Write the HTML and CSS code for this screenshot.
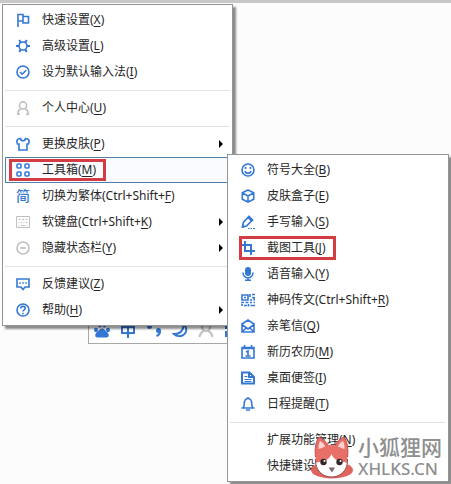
FILE: index.html
```html
<!DOCTYPE html>
<html lang="zh">
<head>
  <meta charset="UTF-8" />
  <meta name="viewport" content="width=device-width, initial-scale=1.0" />
  <title>输入法菜单</title>
  <link rel="stylesheet" href="styles.css">
</head>
<body>
  <div class="status-bar">
    <button aria-label="百度输入法"><svg viewBox="0 0 16 16"><g class="solid"><ellipse cx="2" cy="8" rx="2" ry="2.2"/><ellipse cx="5.800" cy="3.200" rx="1.8" ry="2.4"/><ellipse cx="10.400" cy="3.200" rx="1.8" ry="2.4"/><ellipse cx="14" cy="8" rx="2" ry="2.200"/><path d="M8 6.500c2 0 3 1.500 4.500 3C16 12.500 15 15.500 12.500 15.500h-9C1 15.500 0 12.500 3.500 9.500 5 8 6 6.500 8 6.500z"/></g></svg></button>
    <button aria-label="中文"><svg viewBox="0 0 16 16"><path d="M8 1v15M2 5h12v6H2z"/></svg></button>
    <button aria-label="中文标点"><svg viewBox="0 0 16 16"><circle class="solid" cx="3.500" cy="4.500" r="2.500"/><circle class="solid" cx="12.500" cy="8.500" r="2.500"/><path d="M14 8.500c.2 2.500-.8 4.500-3.500 5.500"/></svg></button>
    <button aria-label="半角"><svg viewBox="0 0 16 16"><path d="M11.500 2c3.500 3 3.800 8 .5 10.500-3 2.500-7.500 2-10-.5 6 0 10-3.500 9.500-10z"/></svg></button>
    <button class="muted" aria-label="登录"><svg viewBox="0 0 16 16"><circle cx="8" cy="5" r="4"/><path d="M1.500 15c.5-3.500 2-5 4.500-6M14.500 15c-.5-3.500-2-5-4.500-6"/></svg></button>
    <button aria-label="工具箱"><svg viewBox="0 0 16 16"><path d="M2 2h4v4H2zM10 2h4v4h-4zM2 10h4v4H2zM10 10h4v4h-4z"/></svg></button>
  </div>

  <ul class="menu main-menu">
    <li><button class="item">
      <svg viewBox="0 0 14 14"><path d="M2 14V1.500h5V8H2M7 3.500h5.500V10H7V8"/></svg>
      <span>快速设置(<u>X</u>)</span>
    </button></li>
    <li><button class="item">
      <svg viewBox="0 0 14 14"><circle cx="7" cy="7" r="4"/><path class="thick" d="M4.800 3.800L3.300 1M9.200 3.800L10.700 1M4.800 10.200L3.300 13M9.200 10.200l1.500 2.800M0 7h3M11 7h3"/></svg>
      <span>高级设置(<u>L</u>)</span>
    </button></li>
    <li><button class="item">
      <svg viewBox="0 0 14 14"><circle cx="7" cy="7" r="6"/><path d="M4 7l2.200 2.200L10.200 5.200"/></svg>
      <span>设为默认输入法(<u>I</u>)</span>
    </button></li>
    <li class="separator"></li>
    <li><button class="item muted">
      <svg viewBox="0 0 14 14"><circle cx="7" cy="4.500" r="3.600"/><path d="M4.500 8C2.500 9 1.800 10.500 1.700 13.200H4M9.500 8c2 1 2.700 2.500 2.800 5.200H10"/></svg>
      <span>个人中心(<u>U</u>)</span>
    </button></li>
    <li class="separator"></li>
    <li><button class="item submenu-parent">
      <svg viewBox="0 0 14 14"><path d="M4.500 1.500C5 4.500 9 4.500 9.500 1.500c2 0 3.500 1.200 3.700 2.800L12.500 7H11v6H3V7H1.500L.8 4.300C1 2.700 2.500 1.500 4.500 1.500z"/></svg>
      <span>更换皮肤(<u>P</u>)</span>
    </button></li>
    <li><button class="item selected">
      <span class="marked toolbox-mark">
        <svg viewBox="0 0 14 14"><rect x="1" y="1" width="4" height="4" rx="1"/><rect x="9" y="1" width="4" height="4" rx="1"/><rect x="1" y="9" width="4" height="4" rx="1"/><rect x="9" y="9" width="4" height="4" rx="1"/></svg>
        <span>工具箱(<u>M</u>)</span>
      </span>
    </button></li>
    <li><button class="item">
      <span class="glyph">简</span>
      <span>切换为繁体(Ctrl+Shift+<u>F</u>)</span>
    </button></li>
    <li><button class="item muted submenu-parent">
      <svg viewBox="0 0 14 14"><path class="thin" d="M.5 1.500h13v11H.5zM2.500 4.500h2M6 4.500h2M9.500 4.500h2M2.500 7.500h1M5 7.500h1M7.500 7.500h1M10 7.500h1.500M2.500 10.500h1M5 10.500h4M10.500 10.500h1"/></svg>
      <span>软键盘(Ctrl+Shift+<u>K</u>)</span>
    </button></li>
    <li><button class="item muted submenu-parent">
      <svg viewBox="0 0 14 14"><circle cx="7" cy="7" r="6"/><path d="M4 7h6"/></svg>
      <span>隐藏状态栏(<u>Y</u>)</span>
    </button></li>
    <li class="separator"></li>
    <li><button class="item">
      <svg viewBox="0 0 14 14"><path d="M1 2h12v8H9l-2 2.500L5 10H1zM3.200 6h1.600M6.200 6h1.600M9.200 6h1.600"/></svg>
      <span>反馈建议(<u>Z</u>)</span>
    </button></li>
    <li><button class="item submenu-parent">
      <svg viewBox="0 0 14 14"><circle cx="7" cy="7" r="6"/><path d="M4.800 5.500c0-3 4.400-2.700 4.400-.3C9.200 6.800 7 6.800 7 8.500M7 9.700v1.500"/></svg>
      <span>帮助(<u>H</u>)</span>
    </button></li>
  </ul>

  <ul class="menu tool-menu">
    <li><button class="item">
      <svg viewBox="0 0 14 14"><circle cx="7" cy="7" r="6"/><path d="M4 8c.8 3 5.200 3 6 0M4.600 4v2M9.400 4v2"/></svg>
      <span>符号大全(<u>B</u>)</span>
    </button></li>
    <li><button class="item">
      <svg viewBox="0 0 14 14"><path d="M7 1l5.700 2.700v6.600L7 13l-5.700-2.700V3.700zM1.500 4L7 7l5.500-3M7 7v6"/></svg>
      <span>皮肤盒子(<u>E</u>)</span>
    </button></li>
    <li><button class="item">
      <svg viewBox="0 0 14 14"><path d="M8 1.500L11.500 5 5.500 11 1.500 12l.8-4.500z"/><path class="solid" d="M8 .5L12.500 5l-2 2L6 2.500zM.5 13l1-4 3 3z"/><path class="thin" d="M7 13.500h1.500M9.500 13.500h1.500M12 13.500h2"/></svg>
      <span>手写输入(<u>S</u>)</span>
    </button></li>
    <li><button class="item">
      <span class="marked crop-mark">
        <svg viewBox="0 0 14 14"><path class="thick" d="M4 0v10h10M0 4h10v10"/></svg>
        <span>截图工具(<u>J</u>)</span>
      </span>
    </button></li>
    <li><button class="item">
      <svg viewBox="0 0 14 14"><rect class="solid" x="4" y="0" width="6" height="9" rx="3"/><path d="M2 5.500c0 7 10 7 10 0M7 11v2.500M4 13.200h6"/></svg>
      <span>语音输入(<u>Y</u>)</span>
    </button></li>
    <li><button class="item">
      <svg viewBox="0 0 14 14"><path d="M1 2h6v5H1zM3 4.500h2M9 1v3M11 1.500h3M9 7h2M13.200 4v3.500M11 4.500h2M0 9.500h3M4.500 9.500h3M9 9.500h2M12.500 9.500H14M1 11v2M3 12.500h3M7.500 11v2.500M9.500 12.500h4.500"/></svg>
      <span>神码传文(Ctrl+Shift+<u>R</u>)</span>
    </button></li>
    <li><button class="item">
      <svg viewBox="0 0 14 14"><path d="M1 5l6-4 6 4v8H1zM1.500 12.500L5 9M12.500 12.500L9 9M1.500 6L7 10l5.500-4"/></svg>
      <span>亲笔信(<u>Q</u>)</span>
    </button></li>
    <li><button class="item">
      <svg viewBox="0 0 14 14"><path d="M1 2.500h12V13H1zM3.500 0v3M10.500 0v3M1 3.500h12"/><path d="M5 7l2-1v5M4.500 11h5"/></svg>
      <span>新历农历(<u>M</u>)</span>
    </button></li>
    <li><button class="item">
      <svg viewBox="0 0 14 14"><path class="thick" d="M1 1.500h7.500L13 6v6.500H1zM8 1.500V6h5"/><path class="thin" d="M3.500 5.500h3M3.500 8.500h7M3.500 10.500h7"/></svg>
      <span>桌面便签(<u>I</u>)</span>
    </button></li>
    <li><button class="item">
      <svg viewBox="0 0 14 14"><path d="M.5 11h13M2 11c1.500-1.500 1-3 1.300-5.500C3.700 3 5 1.500 7 1.500S10.300 3 10.700 5.500C11 8 10.500 9.500 12 11M7 0v2M5 13h4"/></svg>
      <span>日程提醒(<u>T</u>)</span>
    </button></li>
    <li class="separator"></li>
    <li><button class="item no-icon">扩展功能管理(<u>N</u>)</button></li>
    <li><button class="item no-icon">快捷键设置(<u>K</u>)</button></li>
  </ul>

  <div class="watermark">
    <svg class="fox" viewBox="0 0 44 46">
      <ellipse cx="22" cy="35" rx="21" ry="8.500" fill="#e0645c"/>
      <path d="M5.500 22C4.500 14 5.500 7 9 2c4 1.500 7.500 5 9 9h7c1.500-4 5-7.500 9-9 3.500 5 4.500 12 3.500 20z" fill="#e87068" stroke="#b9534e"/>
      <path d="M8.500 14c0-4 .5-6 1.500-8 3 1.500 4.500 4 5.500 6zM34.500 14c0-4-.5-6-1.500-8-3 1.500-4.500 4-5.500 6z" fill="#f9d3d0"/>
      <ellipse cx="21.500" cy="26" rx="16" ry="16" fill="#e87068"/>
      <path d="M5.500 28c6-2 13-1 16-9 3 8 10 7 16 9-.5 8-7.500 14-16 14S6 36 5.500 28z" fill="#fff"/>
      <path d="M5.500 24c-.5 11 6.500 18 16 18s16.500-7 16-18" fill="none" stroke="#8d4b4b"/>
      <circle cx="13.500" cy="27" r="3.200" fill="#35282b"/>
      <circle cx="29.500" cy="27" r="3.200" fill="#35282b"/>
      <circle cx="14.500" cy="26" r="1" fill="#fff"/>
      <circle cx="30.500" cy="26" r="1" fill="#fff"/>
      <path d="M18.500 32.500h6.500l-3 5z" fill="#80666b"/>
    </svg>
    <div class="site">
      <div class="site-name">小狐狸网</div>
      <div class="site-url">XHLKS.CN</div>
    </div>
  </div>
</body>
</html>
```
FILE: styles.css
```css
body {
  margin: 0;
  min-height: 100vh;
  box-sizing: border-box;
  position: relative;
  overflow: hidden;
  border-top: 3px solid #c8c8c8;
  background: #fcfcfc;
  color: #262626;
  font-family: "Noto Sans", "Noto Sans CJK SC", sans-serif;
  font-size: 12px;
}
button {
  border: 0;
  padding: 0;
  background: none;
  font: inherit;
  color: inherit;
}
u {
  text-underline-offset: 2px;
}
svg {
  width: 14px;
  height: 14px;
  flex: none;
  fill: none;
  stroke: #3478d4;
  stroke-width: 1.6;
}
svg .thin {
  stroke-width: 1;
}
svg .thick {
  stroke-width: 2;
}
svg .solid {
  fill: #3478d4;
  stroke: none;
}
.muted svg {
  stroke: #c0c0c0;
}

/* floating menus */
.menu {
  position: absolute;
  box-sizing: border-box;
  margin: 0;
  padding: 2px;
  list-style: none;
  background: #fff;
  border: 1px solid #959595;
  box-shadow: 3px 3px 2px rgba(0,0,0,0.45);
}
.main-menu {
  left: 2px;
  top: 1px;
  width: 231px;
}
.tool-menu {
  left: 227px;
  top: 151px;
  width: 222px;
}
.item {
  display: flex;
  align-items: center;
  gap: 12px;
  box-sizing: border-box;
  width: 100%;
  height: 26px;
  padding: 0 6px 0 10px;
  border: 1px solid transparent;
  line-height: 18px;
  text-align: left;
  white-space: nowrap;
}
.item.no-icon {
  display: block;
  padding-left: 36px;
}
.item.selected {
  border-color: #4f7fa6;
  background: #f9fbfe;
}
.separator {
  height: 1px;
  margin: 5px 0 4px;
  background: #e3e3e3;
}
.submenu-parent::after {
  content: "";
  margin-left: auto;
  border: 4px solid transparent;
  border-left-color: #000;
  border-right-width: 0;
}
.glyph {
  width: 14px;
  color: #3478d4;
  font-size: 14px;
  font-weight: 500;
}

/* red frames round the highlighted commands */
.marked {
  position: relative;
  display: flex;
  align-items: center;
  gap: 12px;
}
.marked::after {
  content: "";
  position: absolute;
  border: 3px solid #d23c42;
}
.toolbox-mark::after {
  inset: -2px -10px -2px -7px;
}
.crop-mark::after {
  inset: -3px -10px -3px -2px;
}

.status-bar {
  position: absolute;
  left: 88px;
  top: 313px;
  display: flex;
  gap: 10px;
  padding: 5px;
  border: 1px solid #a8a8a8;
  background: #fff;
}
.status-bar button,
.status-bar svg {
  display: block;
  width: 16px;
  height: 16px;
}
.status-bar svg {
  stroke-width: 2;
}

.watermark {
  position: absolute;
  right: 9px;
  bottom: 3px;
  display: flex;
  align-items: flex-start;
  gap: 4px;
}
.watermark .fox {
  width: 44px;
  height: 46px;
  stroke: none;
  stroke-width: 1;
}
.site {
  color: #8f8f8f;
  text-shadow: 0 0 2px #fff, 0 0 2px #fff;
}
.site-name {
  font-size: 21px;
  line-height: 24px;
  font-weight: 500;
}
.site-url {
  font-size: 17px;
  line-height: 20px;
  font-weight: 500;
}
```
